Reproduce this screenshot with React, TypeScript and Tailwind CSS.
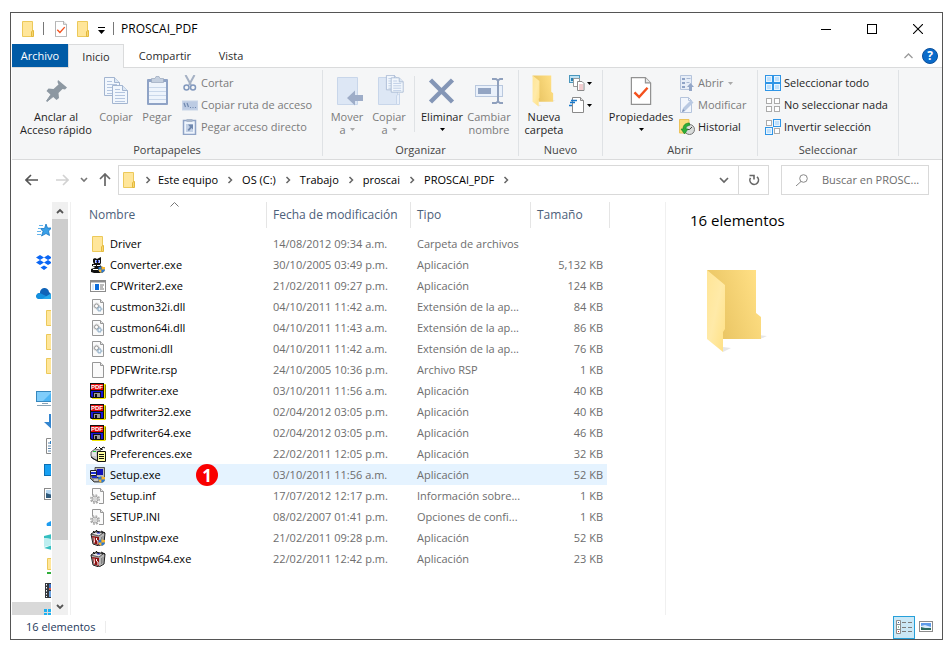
import type { ReactNode } from "react";

type IconProps = { className?: string };

/* ---------- shared icons ---------- */

const FolderIcon = ({ className = "" }: IconProps) => (
  <svg className={`w-4 h-4 shrink-0 ${className}`} viewBox="0 0 16 16">
    <path d="M2.500 .5h10v15h-10z" fill="#ffe69a" stroke="#ecc95a" />
    <path d="M11.500 15.500v-4.500l1-1.500h1v6z" fill="#f7d774" stroke="#e3b93c" />
  </svg>
);

const CheckDocIcon = ({ className = "w-4 h-4" }: IconProps) => (
  <svg className={className} viewBox="0 0 22 30" preserveAspectRatio="xMidYMid meet">
    <path d="M.7 .7h15l5.600 5.600v23h-20.600z" fill="#fff" stroke="#929292" strokeWidth="1.300" />
    <path d="M15.700 .7v5.600h5.600" fill="#e8e8e8" stroke="#929292" strokeWidth="1.200" />
    <path d="M4 16.500l5 5 9-10" fill="none" stroke="#f4511e" strokeWidth="2.600" />
  </svg>
);

const Caret = ({ className = "text-black" }: IconProps) => (
  <svg className={`w-[5px] h-[3px] ${className}`} viewBox="0 0 5 3">
    <path d="M0 0h5l-2.500 3z" fill="currentColor" />
  </svg>
);

const Chevron = ({ className = "" }: IconProps) => (
  <svg className={`w-2 h-2 ${className}`} viewBox="0 0 8 8" fill="none" stroke="currentColor" strokeWidth="1.500">
    <path d="M2.500 1l3 3-3 3" />
  </svg>
);

/* ---------- ribbon icons ---------- */

const PinIcon = () => (
  <svg className="w-8 h-8" viewBox="0 0 32 32">
    <path d="M18 5l9 7.500-2 2-2.500-.5-4 4 .5 5-2.500 2-10-9 2-2.500 5 .5 5-4.500-1-2.500z" fill="#8d98a2" />
    <path d="M12 18l2.500 2.500-7.500 6-.5-.5z" fill="#8d98a2" stroke="#8d98a2" />
  </svg>
);

const Sheet = ({ x, y }: { x: number; y: number }) => (
  <g transform={`translate(${x} ${y})`}>
    <path d="M.5 .5h10l5 5v13h-15z" fill="#f2f7fd" stroke="#a3b5d0" />
    <path d="M10.500 .5v5h5" fill="#dce7f4" stroke="#a3b5d0" />
    <path d="M3 4.500h5M3 7.500h10M3 10.500h10M3 13.500h10M3 16.500h10" stroke="#b4c5df" />
  </g>
);

const CopyIcon = () => (
  <svg className="w-8 h-8" viewBox="0 0 32 32">
    <Sheet x={4} y={2} />
    <Sheet x={12} y={10} />
  </svg>
);

const PasteIcon = () => (
  <svg className="w-8 h-8" viewBox="0 0 32 32">
    <rect x="6" y="4" width="21" height="26" rx="1" fill="#8fa3c6" />
    <rect x="8" y="7" width="17" height="21" fill="#eef4fc" />
    <path d="M8 12.500h17M8 16.500h17M8 20.500h17M8 24.500h17" stroke="#c9d7ea" />
    <path d="M10.500 3.500h3.500l1-2h3l1 2h3.500v4h-12z" fill="#c4cfdf" stroke="#9aa8bd" strokeWidth=".7" />
  </svg>
);

const ScissorsIcon = () => (
  <svg className="w-4 h-4" viewBox="0 0 16 16" fill="none">
    <path d="M3.500 0l5.500 10M12.500 0L7 10" stroke="#a5b1c4" strokeWidth="2" />
    <circle cx="4.500" cy="12.500" r="2.500" stroke="#8198bd" strokeWidth="1.500" />
    <circle cx="11" cy="12.500" r="2.500" stroke="#8198bd" strokeWidth="1.500" />
  </svg>
);

const PathIcon = () => (
  <svg className="w-4 h-4" viewBox="0 0 16 16">
    <rect x=".5" y="4" width="15" height="9" fill="#bccbe3" stroke="#c9d5e8" />
    <path d="M2 6l1.500 4M5 6l1.500 4" stroke="#6f87ae" strokeWidth="1.200" />
    <path d="M8 10.500h1M10.500 10.500h1M13 10.500h1" stroke="#6f87ae" />
  </svg>
);

const PasteLinkIcon = () => (
  <svg className="w-4 h-4" viewBox="0 0 16 16">
    <rect x="1.500" y="1.500" width="12" height="14" fill="#eef4fc" stroke="#8fa3c6" strokeWidth="1.500" />
    <rect x="4.500" y="0" width="6" height="3" fill="#a9b7cc" />
    <rect x="4" y="5" width="7" height="8" fill="#c3d1e6" />
    <path d="M6 5.500h5v5l-1.500-1.500-2.500 3-1.500-1 2.500-3z" fill="#6f87ae" />
  </svg>
);

const MoveToIcon = () => (
  <svg className="w-8 h-8" viewBox="0 0 32 32">
    <path d="M6.500 2.500h20v27h-20z" fill="#dde7f5" stroke="#c8d6ea" />
    <path d="M32 20v6h-8v4.500l-8-7.500 8-7.500v4.500z" fill="#9eadc8" />
  </svg>
);

const CopyToIcon = () => (
  <svg className="w-8 h-8" viewBox="0 0 32 32">
    <path d="M5.500 2.500h19v27h-19z" fill="#dde7f5" stroke="#c8d6ea" />
    <path d="M23.500 29.500v-9l3-2v11z" fill="#e9f0fa" stroke="#c8d6ea" />
    <g transform="translate(13 0) scale(.8)">
      <Sheet x={0} y={0} />
      <Sheet x={6} y={3} />
    </g>
  </svg>
);

const DeleteIcon = () => (
  <svg className="w-8 h-8" viewBox="0 0 32 32">
    <path d="M4.500 5l22 22M26.500 5l-22 22" stroke="#8496b6" strokeWidth="4.500" />
  </svg>
);

const RenameIcon = () => (
  <svg className="w-8 h-8" viewBox="0 0 32 32" fill="none">
    <rect x="2.500" y="10.500" width="27" height="11" fill="#eaf1fb" stroke="#b9c8de" />
    <rect x="5" y="13" width="13" height="6" fill="#93a5c3" />
    <path d="M19 4h4l2 1.500 2-1.500h3M25 4v24M19 28h4l2-1.500 2 1.500h3" stroke="#8fa0bd" strokeWidth="2" />
  </svg>
);

const OpenFolder = ({ className = "w-8 h-8" }: IconProps) => (
  <svg className={className} viewBox="0 0 62 84">
    <defs>
      <linearGradient id="back" x1="0" x2="1" y1=".7" y2=".3">
        <stop offset="0.200" stopColor="#ebc766" />
        <stop offset="1" stopColor="#ffdf84" />
      </linearGradient>
      <linearGradient id="flap" x1="0" x2="1" y1="0" y2="1">
        <stop offset="0" stopColor="#ffe596" />
        <stop offset=".5" stopColor="#ffeaa8" />
        <stop offset="1" stopColor="#ffe082" />
      </linearGradient>
    </defs>
    <path d="M53 66l8 1-7 3zM17 78l8 1-8 4z" fill="#e6e6e6" />
    <path d="M1 1h49v43l5 4v22H17z" fill="url(#back)" />
    <path d="M1 1l18 15v44l-2 3v20L1 70z" fill="url(#flap)" />
  </svg>
);

const NewItemIcon = () => (
  <svg className="w-4 h-4" viewBox="0 0 16 16">
    <rect x=".5" y=".5" width="10" height="7" fill="#bfe3f5" stroke="#4a97bd" />
    <rect x="2" y="3" width="3" height="3" fill="#267fb0" />
    <path d="M4.500 3.500h6v8h-6z" fill="#fff" stroke="#9a9a9a" />
    <path d="M8.500 6.500h4.500l2 2v7h-6.500z" fill="#fff" stroke="#8a8a8a" />
    <path d="M10 10h4M10 12h4M10 14h4" stroke="#e59aa0" />
  </svg>
);

const EasyAccessIcon = () => (
  <svg className="w-4 h-4" viewBox="0 0 16 16">
    <path d="M3.500 .5h8l3 3v12h-11z" fill="#fff" stroke="#8a8a8a" />
    <path d="M11.500 .5v3h3" fill="#ddd" stroke="#8a8a8a" />
    <path d="M2 3.500h6M1 5.500h5M0 8.500h3" stroke="#1979ca" strokeWidth="1.300" />
  </svg>
);

const OpenIcon = () => (
  <svg className="w-4 h-4" viewBox="0 0 16 16">
    <path d="M1.500 .5h11v14h-11z" fill="#e6edf7" stroke="#b5c4dc" />
    <path d="M3 3h3v2h-3zM3 7h3v2h-3zM3 11h3v2h-3z" fill="#8fa3c6" />
    <path d="M7.500 3.500h4M7.500 7.500h3" stroke="#a9b9d3" />
    <path d="M10 16v-4h-2l3.500-4 3.500 4h-2v4z" fill="#93a6c7" />
  </svg>
);

const EditIcon = () => (
  <svg className="w-4 h-4" viewBox="0 0 16 16">
    <path d="M1.500 .5h8l3 3v12h-11z" fill="#f2f6fc" stroke="#b5c4dc" />
    <path d="M9.500 .5v3h3" fill="none" stroke="#b5c4dc" />
    <path d="M3 15l1-4 8-8 2.500 2.500-8 8z" fill="#b9c9e2" />
    <path d="M3 15l1-3 2 2z" fill="#8095ba" />
  </svg>
);

const HistoryIcon = () => (
  <svg className="w-4 h-4" viewBox="0 0 16 16">
    <path d="M.5 .5h9.500v8h1.500v5.500h-11z" fill="#fbdc7b" stroke="#ecc35a" />
    <circle cx="10.500" cy="10.500" r="5" fill="#d9dcdb" stroke="#777" />
    <path d="M10.500 10.500l2.500-2.500M10.500 10.500h-2" stroke="#444" />
    <path d="M10.500 4c-4 0-6.500 2-6.500 6h-2l3.500 5 3.500-5h-2c0-2 1-3.500 3.500-3.500z" fill="#2fae3a" stroke="#158322" strokeWidth=".6" />
  </svg>
);

const Tile = ({ x, y, on }: { x: number; y: number; on: boolean }) => (
  <g>
    {on ? (
      <>
        <rect x={x + 0.5} y={y + 0.5} width="7" height="7" fill="#bfe0fb" stroke="#2f95e6" />
        <rect x={x + 1.5} y={y + 1.5} width="5" height="5" fill="none" stroke="#e8f5ff" />
      </>
    ) : (
      <rect x={x + 1.5} y={y + 1.5} width="5" height="5" fill="#fff" stroke="#ababab" />
    )}
  </g>
);

const TilesIcon = ({ on }: { on: boolean[] }) => (
  <svg className="w-4 h-4" viewBox="0 0 16 16">
    {on.map((v, i) => (
      <Tile key={i} x={(i % 2) * 8} y={i > 1 ? 8 : 0} on={v} />
    ))}
  </svg>
);

/* ---------- file icons ---------- */

const Shield = () => (
  <g>
    <path d="M11.500 9c-1.500 1-2 1-3 1v3c0 1.500 1.500 2.500 3 3z" fill="#2b78d4" />
    <path d="M11.500 9c1.500 1 2 1 3.500 1v3c0 1.500-2 2.500-3.500 3z" fill="#f7b731" />
    <path d="M8.500 12.500h3v3.500c-1.500-.5-3-1.500-3-3.500z" fill="#f7b731" />
    <path d="M11.500 12.500h3.500c0 2-2 3-3.500 3.500z" fill="#2b78d4" />
  </g>
);

const PageShape = () => (
  <g>
    <path d="M2.500 .5h8l3 3v12h-11z" fill="#fafafa" stroke="#979797" />
    <path d="M10.500 .5v3h3" fill="#e5e5e5" stroke="#979797" />
  </g>
);

const FileIcon = ({ kind }: { kind: string }) => {
  if (kind === "folder") return <FolderIcon />;
  return (
    <svg className="w-4 h-4 shrink-0" viewBox="0 0 16 16">
      {kind === "converter" && (
        <>
          <path d="M3 2l2-1 2 1 2-1 2-1v6l-1 2 2 2h2v4l-2 2h-8l-3-1v-3l3-1 1-1-3-1v-2h2l-1-2z" fill="#111" />
          <path d="M5 3h2v3h-2zM8 3h2v3h-2z" fill="#c9d4ff" />
          <path d="M3 8.500h3M7 8.500h3M3 12.500h5" stroke="#fff" />
          <path d="M6.500 3.500v2M8.500 3.500v2" stroke="#1733d6" />
          <Shield />
        </>
      )}
      {kind === "cpwriter" && (
        <>
          <rect x=".5" y="2.500" width="15" height="11" fill="#fff" stroke="#8c8c8c" />
          <path d="M0 3.500h16" stroke="#8c8c8c" strokeWidth="2" />
          <rect x="5" y="6" width="4" height="6" fill="#0b6cda" />
          <rect x="2" y="6" width="2" height="6" fill="#d7e9fb" />
          <path d="M10 7h4M10 9h3M10 11h4" stroke="#777" />
        </>
      )}
      {kind === "dll" && (
        <>
          <PageShape />
          <circle cx="6.500" cy="7" r="2" fill="#fff" stroke="#999" />
          <circle cx="6.500" cy="7" r="2.800" fill="none" stroke="#999" strokeWidth=".8" strokeDasharray="1 1" />
          <circle cx="9.500" cy="10" r="1.700" fill="#eef6fd" stroke="#88a8c2" />
          <circle cx="9.500" cy="10" r="2.500" fill="none" stroke="#88a8c2" strokeWidth=".8" strokeDasharray="1 1" />
        </>
      )}
      {kind === "page" && <PageShape />}
      {kind === "ini" && (
        <>
          <PageShape />
          <path d="M0 7h5v-1h4v10h-9z" fill="#fff" />
          <circle cx="5" cy="11" r="4.200" fill="none" stroke="#a5a5a5" strokeWidth="1.400" strokeDasharray="1.900 1.400" />
          <circle cx="5" cy="11" r="3" fill="#e2e2e2" stroke="#a5a5a5" />
          <circle cx="5" cy="11" r="1.200" fill="#fff" stroke="#a5a5a5" strokeWidth=".6" />
        </>
      )}
      {kind === "pdf" && (
        <>
          <path d="M2 1h14v14l-1 1h-13z" fill="#f2e600" />
          <path d="M15.500 2v13" stroke="#8a8400" />
          <path d="M0 0h14v15h-13l-1-1z" fill="#111" />
          <path d="M1 1h12v6h-12z" fill="#e30b0b" />
          <text x="7" y="6" textAnchor="middle" fill="#fff" className="font-['Liberation_Sans'] font-bold text-[6px]">
            PDF
          </text>
          <path d="M1 8h2v6h-1l-1-1zM11 8h2v6h-2zM3 8h8v1h-8z" fill="#1616d8" />
          <path d="M4 10h6v4h-6z" fill="#9a9a9a" />
          <path d="M5 11h2v3h-2z" fill="#111" />
        </>
      )}
      {kind === "prefs" && (
        <>
          <path d="M1 6l4-3 5 1v7l-3 3-4-1-2-3z" fill="#c9c9c9" stroke="#666" />
          <path d="M2 7h4M2 9h4" stroke="#fff" />
          <path d="M1 11l6 4M9 1l2 2 2-2 2 1M5 3l2-2M10 4l3-1" stroke="#111" fill="none" />
          <path d="M3 5h3v1h-3z" fill="#1fbf3a" />
          <path d="M7.500 5.500h8v10h-8z" fill="#ffffa0" stroke="#111" />
          <path d="M9 8.500h5M9 10.500h5M9 12.500h5" stroke="#111" />
        </>
      )}
      {kind === "setup" && (
        <>
          <path d="M5 .5h9.500v10h-9.500z" fill="#b8b8b8" stroke="#333" strokeWidth=".8" />
          <path d="M7 2h6v6h-6z" fill="#1010b8" />
          <path d="M.5 3.500h6v5h-6z" fill="#efefef" stroke="#222" />
          <path d="M0 9h6l2 2h4v4h-8l-4-4z" fill="#8a8a8a" stroke="#222" strokeWidth=".8" />
          <path d="M1 5h5v2h-5zM2 9h5v2h-5z" fill="#1c2ed0" />
          <path d="M4 13h4" stroke="#fff" />
          <Shield />
        </>
      )}
      {(kind === "uninst" || kind === "uninstShield") && (
        <>
          <path d="M1 4l5-3 9 2-1 10-5 3-6-2z" fill="#b5b5b5" stroke="#222" />
          <path d="M1 4l4-2 8 1-4 3z" fill="#e6e6e6" stroke="#222" strokeWidth=".7" />
          <path d="M3 1l2 2M6 0l3 3M11 1l4 2" stroke="#111" />
          <path d="M2 6l7 1v8l-5-1.500z" fill="#8f1111" />
          <path d="M4 7.500l.5 5M6.500 8v2l1.500 1v3" stroke="#fff" fill="none" />
          <path d="M7 3h3" stroke="#2430d8" />
          <path d="M11.500 7v6M13 6v6" stroke="#6d6d6d" strokeWidth=".7" />
          {kind === "uninstShield" && <Shield />}
        </>
      )}
    </svg>
  );
};

/* ---------- navigation pane icons ---------- */

const NavIcon = ({ kind }: { kind: string }) => (
  <svg className="w-4 h-4 shrink-0" viewBox="0 0 16 16">
    {kind === "star" && (
      <>
        <path d="M10 2l1.500 4h4l-3 3 1 4.500-3.500-2-4.500 2.500 1.500-4.500-2.500-3h4z" fill="#3aa0e8" stroke="#1877c4" strokeWidth=".8" />
        <path d="M3 3.500h4M2 6.500h3M1 9.500h4M1 12.500h4" stroke="#63b4ec" />
      </>
    )}
    {kind === "dropbox" && (
      <path
        d="M4 1l4 2.500-4 2.500-4-2.500zM12 1l4 2.500-4 2.500-4-2.500zM4 6l4 2.500-4 2.500-4-2.500zM12 6l4 2.500-4 2.500-4-2.500zM8 11.500l3.500 2-3.500 2.500-3.500-2.500z"
        fill="#0a66f5"
      />
    )}
    {kind === "onedrive" && (
      <>
        <path d="M4 7a4.500 4.500 0 0 1 9-1l3 3v4h-13a3 3 0 0 1 1-6z" fill="#0f63b8" />
        <path d="M0 11a3.500 3.500 0 0 1 5-3.500l11 5.500h-13a3 3 0 0 1-3-2z" fill="#1490df" />
        <path d="M6 13l8-5h2v5z" fill="#28a8ea" />
      </>
    )}
    {kind === "folder" && <path d="M2.500 .5h11v15h-11z" fill="#ffe69a" stroke="#ecc95a" />}
    {kind === "pc" && (
      <>
        <rect x=".5" y="1.500" width="17" height="10" fill="#4db5f5" stroke="#3787bd" />
        <path d="M1 2h15l-9 9h-6z" fill="#7fcdfb" />
        <path d="M6 13.500h6M1 15.500h15" stroke="#8aa3b5" />
      </>
    )}
    {kind === "down" && <path d="M5 0h5v8h5l-7.500 7-7.500-7h5z" fill="#3385cf" />}
    {kind === "doc" && (
      <>
        <path d="M2.500 .5h11v15h-11z" fill="#fff" stroke="#8a8a8a" />
        <path d="M4 5h5M4 8h5M4 10.500h5M4 13h5" stroke="#5c86ad" />
        <path d="M6 3h3v3h-3z" fill="#2b7cc0" />
      </>
    )}
    {kind === "desktop" && <rect x=".5" y="2.500" width="16" height="11" fill="#17a0f2" stroke="#0b6fb3" />}
    {kind === "pictures" && (
      <>
        <rect x=".5" y="2.500" width="16" height="11" fill="#fff" stroke="#8a8a8a" />
        <path d="M2 4h12v8h-12z" fill="#b7d8f2" />
        <path d="M2 7l3 1 4 1v3h-7z" fill="#2f5a7c" />
      </>
    )}
    {kind === "cloud" && <path d="M3 16a3 3 0 0 1 0-3l4-2h9v5z" fill="#1d9cf0" />}
    {kind === "cube" && (
      <>
        <path d="M0 2l8-2v5l-8-1zM0 14l8-3v5z" fill="#35bfc0" />
        <path d="M0 4l8 1v6l-8 2z" fill="#bdeef0" />
      </>
    )}
    {kind === "share" && (
      <>
        <path d="M3.500 .5h11v11h-11z" fill="#ffe69a" stroke="#ecc95a" />
        <path d="M3 15h8" stroke="#2fae3a" strokeWidth="2" />
      </>
    )}
    {kind === "film" && (
      <>
        <rect x="1" y="1" width="15" height="15" fill="#33373d" />
        <path d="M2.500 2v13" stroke="#fff" strokeDasharray="1.500 1.500" />
        <path d="M5 2h10v6h-10z" fill="#3f74c9" />
        <path d="M5 9h10v6h-10z" fill="#6aa1df" />
        <path d="M5 6h10v2h-10z" fill="#d8574a" />
      </>
    )}
    {kind === "windows" && (
      <path d="M0 7h3v3h-3zM4 7h3v3h-3zM0 11h3v3h-3zM4 11h3v3h-3z" fill="#1cb0f0" />
    )}
  </svg>
);

/* ---------- ribbon parts ---------- */

const Group = ({ label, className, children }: { label: string; className: string; children: ReactNode }) => (
  <section className={`flex flex-col shrink-0 h-[86px] mt-[2px] border-r border-[#dfe2e5] ${className}`}>
    <div className="flex items-start pt-[2px] h-[74px]">{children}</div>
    <h2 className="text-center leading-3 text-[#444]">{label}</h2>
  </section>
);

type BigProps = {
  icon: ReactNode;
  lines: string[];
  className: string;
  caret?: boolean;
  disabled?: boolean;
};

const BigButton = ({ icon, lines, className, caret, disabled }: BigProps) => (
  <button
    disabled={disabled}
    className={`flex flex-col items-center shrink-0 pt-[3px] whitespace-nowrap leading-[13px] ${
      disabled ? "text-[#7b7b7b]" : "text-[#1e1e1e]"
    } ${className}`}
  >
    {icon}
    <span className="pt-[3px]">{lines[0]}</span>
    <span className="flex items-center gap-1 min-h-[13px]">
      {lines[1]}
      {caret && <Caret className={disabled ? "text-[#a9a9a9]" : "text-black"} />}
    </span>
  </button>
);

type SmallProps = { icon: ReactNode; text: string; caret?: boolean; disabled?: boolean };

const SmallButton = ({ icon, text, caret, disabled }: SmallProps) => (
  <button
    disabled={disabled}
    className={`flex items-center gap-[3px] h-[22px] whitespace-nowrap ${
      disabled ? "text-[#7b7b7b]" : "text-[#1e1e1e]"
    }`}
  >
    {icon}
    {text}
    {caret && <Caret className="ml-[2px] text-[#a9a9a9]" />}
  </button>
);

/* ---------- data ---------- */

const files = [
  { name: "Driver", kind: "folder", date: "14/08/2012 09:34 a.m.", type: "Carpeta de archivos", size: "" },
  { name: "Converter.exe", kind: "converter", date: "30/10/2005 03:49 p.m.", type: "Aplicación", size: "5,132 KB" },
  { name: "CPWriter2.exe", kind: "cpwriter", date: "21/02/2011 09:27 p.m.", type: "Aplicación", size: "124 KB" },
  { name: "custmon32i.dll", kind: "dll", date: "04/10/2011 11:42 a.m.", type: "Extensión de la ap...", size: "84 KB" },
  { name: "custmon64i.dll", kind: "dll", date: "04/10/2011 11:43 a.m.", type: "Extensión de la ap...", size: "86 KB" },
  { name: "custmoni.dll", kind: "dll", date: "04/10/2011 11:42 a.m.", type: "Extensión de la ap...", size: "76 KB" },
  { name: "PDFWrite.rsp", kind: "page", date: "24/10/2005 10:36 p.m.", type: "Archivo RSP", size: "1 KB" },
  { name: "pdfwriter.exe", kind: "pdf", date: "03/10/2011 11:56 a.m.", type: "Aplicación", size: "40 KB" },
  { name: "pdfwriter32.exe", kind: "pdf", date: "02/04/2012 03:05 p.m.", type: "Aplicación", size: "40 KB" },
  { name: "pdfwriter64.exe", kind: "pdf", date: "02/04/2012 03:05 p.m.", type: "Aplicación", size: "46 KB" },
  { name: "Preferences.exe", kind: "prefs", date: "22/02/2011 12:05 p.m.", type: "Aplicación", size: "32 KB" },
  { name: "Setup.exe", kind: "setup", date: "03/10/2011 11:56 a.m.", type: "Aplicación", size: "52 KB", step: 1 },
  { name: "Setup.inf", kind: "ini", date: "17/07/2012 12:17 p.m.", type: "Información sobre...", size: "1 KB" },
  { name: "SETUP.INI", kind: "ini", date: "08/02/2007 01:41 p.m.", type: "Opciones de confi...", size: "1 KB" },
  { name: "unInstpw.exe", kind: "uninstShield", date: "21/02/2011 09:28 p.m.", type: "Aplicación", size: "52 KB" },
  { name: "unInstpw64.exe", kind: "uninst", date: "22/02/2011 12:42 p.m.", type: "Aplicación", size: "23 KB" },
];

const navItems = [
  { kind: "star", style: "mt-4 pl-6" },
  { kind: "dropbox", style: "mt-2 pl-6" },
  { kind: "onedrive", style: "mt-2 pl-6" },
  { kind: "folder", style: "pl-8" },
  { kind: "folder", style: "pl-8" },
  { kind: "folder", style: "pl-8" },
  { kind: "pc", style: "mt-2 pl-6" },
  { kind: "down", style: "pl-8" },
  { kind: "doc", style: "pl-8" },
  { kind: "desktop", style: "pl-8" },
  { kind: "pictures", style: "pl-8" },
  { kind: "cloud", style: "pl-8" },
  { kind: "cube", style: "pl-8" },
  { kind: "share", style: "pl-8" },
  { kind: "film", style: "pl-8" },
];

const crumbs = ["Este equipo", "OS (C:)", "Trabajo", "proscai", "PROSCAI_PDF"];

const columns = [
  { label: "Nombre", pad: "pl-[3px]", sorted: true },
  { label: "Fecha de modificación", pad: "pl-[6px]" },
  { label: "Tipo", pad: "pl-[6px]" },
  { label: "Tamaño", pad: "pl-[6px]" },
];

/* ---------- sections ---------- */

const TitleBar = () => (
  <header className="flex items-center h-[31px] pl-2 pr-px">
    <FolderIcon />
    <span className="w-px h-[13px] bg-[#777] ml-[7px] mr-[9px]" />
    <button aria-label="Propiedades">
      <CheckDocIcon className="w-4 h-4" />
    </button>
    <button aria-label="Nueva carpeta" className="ml-[6px]">
      <FolderIcon />
    </button>
    <button aria-label="Personalizar barra" className="ml-[7px] mt-1">
      <svg className="w-[7px] h-[7px]" viewBox="0 0 7 7">
        <path d="M0 .5h7" stroke="#000" />
        <path d="M0 3h7l-3.500 4z" fill="#000" />
      </svg>
    </button>
    <span className="w-px h-[13px] bg-[#777] ml-[8px] mr-[7px]" />
    <h1 className="text-[12px] text-black">PROSCAI_PDF</h1>
    <div className="flex ml-auto">
      <button aria-label="Minimizar" className="flex items-center justify-center w-[46px] h-[30px]">
        <svg className="w-[10px] h-[10px]" viewBox="0 0 10 10">
          <path d="M0 5.500h10" stroke="#000" />
        </svg>
      </button>
      <button aria-label="Maximizar" className="flex items-center justify-center w-[46px] h-[30px]">
        <svg className="w-[10px] h-[10px]" viewBox="0 0 10 10">
          <rect x=".5" y=".5" width="9" height="9" fill="none" stroke="#000" />
        </svg>
      </button>
      <button aria-label="Cerrar" className="flex items-center justify-center w-[46px] h-[30px]">
        <svg className="w-[10px] h-[10px]" viewBox="0 0 10 10">
          <path d="M0 0l10 10M10 0l-10 10" stroke="#000" strokeWidth="1.100" />
        </svg>
      </button>
    </div>
  </header>
);

const Tabs = () => (
  <nav className="flex h-6 border-b border-[#dadbdc] text-[#2b2b2b]">
    <button className="w-14 bg-[#005ba6] text-white">Archivo</button>
    <button className="w-14 -mb-px bg-[#f5f6f7] border-x border-t border-[#dadbdc]">Inicio</button>
    <button className="w-[82px]">Compartir</button>
    <button className="w-[50px]">Vista</button>
    <div className="flex items-center gap-[9px] ml-auto pr-[4px]">
      <button aria-label="Minimizar la cinta">
        <svg className="w-[9px] h-[6px]" viewBox="0 0 9 6" fill="none" stroke="#9a9a9a" strokeWidth="1.300">
          <path d="M.5 5l4-4 4 4" />
        </svg>
      </button>
      <button
        aria-label="Ayuda"
        className="flex items-center justify-center w-4 h-4 rounded-full bg-[#0a6bca] border border-[#0a4f9b] text-white text-[12px] font-bold leading-none"
      >
        ?
      </button>
    </div>
  </nav>
);

const Ribbon = () => (
  <div className="flex h-[92px] overflow-hidden bg-[#f5f6f7] border-b border-[#dadbdc]">
    <Group label="Portapapeles" className="w-[311px]">
      <BigButton icon={<PinIcon />} lines={["Anclar al", "Acceso rápido"]} className="w-[80px] ml-1" />
      <BigButton icon={<CopyIcon />} lines={["Copiar"]} className="w-10" disabled />
      <BigButton icon={<PasteIcon />} lines={["Pegar"]} className="w-[42px]" disabled />
      <div className="flex flex-col ml-1">
        <SmallButton icon={<ScissorsIcon />} text="Cortar" disabled />
        <SmallButton icon={<PathIcon />} text="Copiar ruta de acceso" disabled />
        <SmallButton icon={<PasteLinkIcon />} text="Pegar acceso directo" disabled />
      </div>
    </Group>
    <Group label="Organizar" className="w-[196px]">
      <BigButton icon={<MoveToIcon />} lines={["Mover", "a"]} className="w-[42px] ml-[3px]" caret disabled />
      <BigButton icon={<CopyToIcon />} lines={["Copiar", "a"]} className="w-[42px]" caret disabled />
      <span className="w-px h-14 mt-1 ml-1 mr-1 bg-[#dfe2e5]" />
      <BigButton icon={<DeleteIcon />} lines={["Eliminar"]} className="w-[46px]" caret />
      <BigButton icon={<RenameIcon />} lines={["Cambiar", "nombre"]} className="w-12" disabled />
    </Group>
    <Group label="Nuevo" className="w-[84px]">
      <BigButton icon={<OpenFolder />} lines={["Nueva", "carpeta"]} className="w-[42px] ml-1" />
      <div className="flex flex-col ml-1">
        <button aria-label="Nuevo elemento" className="flex items-center gap-[2px] h-[22px]">
          <NewItemIcon />
          <Caret />
        </button>
        <button aria-label="Fácil acceso" className="flex items-center gap-[2px] h-[22px]">
          <EasyAccessIcon />
          <Caret />
        </button>
      </div>
    </Group>
    <Group label="Abrir" className="w-[155px]">
      <BigButton icon={<CheckDocIcon className="w-8 h-7 my-[2px]" />} lines={["Propiedades"]} className="w-[68px] ml-1" caret />
      <div className="flex flex-col ml-1">
        <SmallButton icon={<OpenIcon />} text="Abrir" caret disabled />
        <SmallButton icon={<EditIcon />} text="Modificar" disabled />
        <SmallButton icon={<HistoryIcon />} text="Historial" />
      </div>
    </Group>
    <Group label="Seleccionar" className="w-[141px]">
      <div className="flex flex-col ml-[7px]">
        <SmallButton icon={<TilesIcon on={[true, true, true, true]} />} text="Seleccionar todo" />
        <SmallButton icon={<TilesIcon on={[false, false, false, false]} />} text="No seleccionar nada" />
        <SmallButton icon={<TilesIcon on={[false, true, true, false]} />} text="Invertir selección" />
      </div>
    </Group>
  </div>
);

const AddressRow = () => (
  <div className="flex items-center h-[42px] pl-[13px] pr-[13px] pb-[2px]">
    <button aria-label="Atrás" className="text-[#555]">
      <svg className="w-[14px] h-3" viewBox="0 0 14 12" fill="none" stroke="currentColor" strokeWidth="1.600">
        <path d="M6 1l-5 5 5 5M1 6h12" />
      </svg>
    </button>
    <button aria-label="Adelante" className="ml-4 text-[#d2d2d2]">
      <svg className="w-[14px] h-3" viewBox="0 0 14 12" fill="none" stroke="currentColor" strokeWidth="1.600">
        <path d="M8 1l5 5-5 5M13 6h-12" />
      </svg>
    </button>
    <button aria-label="Recientes" className="ml-[11px] text-[#777]">
      <svg className="w-2 h-[6px]" viewBox="0 0 8 6" fill="none" stroke="currentColor" strokeWidth="1.600">
        <path d="M1 1l3 3 3-3" />
      </svg>
    </button>
    <button aria-label="Subir" className="ml-[11px] text-[#666]">
      <svg className="w-3 h-[14px]" viewBox="0 0 12 14" fill="none" stroke="currentColor" strokeWidth="1.700">
        <path d="M1 6l5-5 5 5M6 1v12" />
      </svg>
    </button>
    <div className="flex flex-1 items-center h-[30px] ml-[7px] border border-[#d9d9d9]">
      <FolderIcon className="ml-[2px]" />
      <ol className="flex items-center flex-1 ml-px text-black">
        <li className="flex items-center justify-center w-5">
          <Chevron className="text-[#666]" />
        </li>
        {crumbs.map((c) => (
          <li key={c} className="flex items-center">
            <button className="whitespace-nowrap">{c}</button>
            <span className="flex justify-center w-6">
              <Chevron className="text-[#666]" />
            </span>
          </li>
        ))}
      </ol>
      <button aria-label="Ubicaciones anteriores" className="flex justify-center w-[29px] text-[#666]">
        <svg className="w-[10px] h-[7px]" viewBox="0 0 10 7" fill="none" stroke="currentColor" strokeWidth="1.700">
          <path d="M1 1l4 4 4-4" />
        </svg>
      </button>
      <button
        aria-label="Actualizar"
        className="flex items-center justify-center w-[30px] h-full border-l border-[#d9d9d9] text-[#666]"
      >
        <svg className="w-3 h-3" viewBox="0 0 12 12" fill="none" stroke="currentColor" strokeWidth="1.600">
          <path d="M9 2.800a4.300 4.300 0 1 1-6.500 1" />
          <path d="M1.500 1.500h4.500v4" />
        </svg>
      </button>
    </div>
    <label className="flex items-center w-[148px] h-[30px] ml-3 pl-[14px] border border-[#d9d9d9]">
      <svg className="w-3 h-3 shrink-0" viewBox="0 0 12 12" fill="none" stroke="#888">
        <circle cx="7.500" cy="4.500" r="3.800" />
        <path d="M5 7.500l-5 4.500" />
      </svg>
      <input
        type="text"
        aria-label="Buscar en PROSCAI_PDF"
        placeholder="Buscar en PROSC..."
        className="flex-1 min-w-0 ml-[14px] outline-none placeholder:text-[#6d6d6d]"
      />
    </label>
  </div>
);

const NavPane = () => (
  <aside className="flex shrink-0 w-[59px] border-r border-[#f0f0f0]">
    <div className="flex flex-col w-10 overflow-hidden pr-px">
      {navItems.map((item, i) => (
        <div key={i} className={`flex items-center h-6 shrink-0 overflow-hidden ${item.style}`}>
          <NavIcon kind={item.kind} />
        </div>
      ))}
      <div className="flex items-start shrink-0 overflow-hidden h-[13px] pl-8 bg-[#d9d9d9]">
        <NavIcon kind="windows" />
      </div>
    </div>
    <div className="flex flex-col w-4 bg-[#f0f0f0] text-[#555]">
      <button aria-label="Subir lista" className="flex items-center justify-center h-[17px]">
        <svg className="w-2 h-[6px]" viewBox="0 0 8 6" fill="none" stroke="currentColor" strokeWidth="1.800">
          <path d="M1 5l3-3 3 3" />
        </svg>
      </button>
      <div className="grow-[11] bg-[#cdcdcd]" />
      <div className="grow-[2]" />
      <button aria-label="Bajar lista" className="flex items-center justify-center h-[17px]">
        <svg className="w-2 h-[6px]" viewBox="0 0 8 6" fill="none" stroke="currentColor" strokeWidth="1.800">
          <path d="M1 1l3 3 3-3" />
        </svg>
      </button>
    </div>
  </aside>
);

const FileTable = () => (
  <table className="self-start table-fixed w-[524px] ml-[15px] border-collapse text-[#6d6d6d]">
    <colgroup>
      <col className="w-[181px]" />
      <col className="w-[144px]" />
      <col className="w-[120px]" />
      <col className="w-[76px]" />
      <col className="w-[3px]" />
    </colgroup>
    <thead>
      <tr>
        {columns.map((c, i) => (
          <th key={c.label} colSpan={i === 3 ? 2 : 1} className="h-[31px] p-0 align-top font-normal">
            <button
              className={`relative flex items-center w-full h-[26px] border-r border-[#e5e5e5] text-[12px] text-[#4c607a] whitespace-nowrap ${c.pad}`}
            >
              {c.label}
              {c.sorted && (
                <svg
                  className="absolute top-0 left-[84px] w-[9px] h-[5px]"
                  viewBox="0 0 9 5"
                  fill="none"
                  stroke="#777"
                >
                  <path d="M.5 4.500l4-4 4 4" />
                </svg>
              )}
            </button>
          </th>
        ))}
      </tr>
    </thead>
    <tbody>
      {files.map((f) => {
        const bg = f.step ? "bg-[#e5f3ff]" : "";
        return (
          <tr key={f.name} className="h-[21px] whitespace-nowrap">
            <td className={`relative p-0 text-black ${bg}`}>
              <div className="flex items-center gap-1 pl-1">
                <FileIcon kind={f.kind} />
                {f.name}
              </div>
              {f.step && (
                <span className="absolute top-0 left-[110px] flex items-center justify-center w-[22px] h-[22px] rounded-full bg-[#f90000] text-white font-bold text-[17px] leading-none">
                  {f.step}
                </span>
              )}
            </td>
            <td className={`p-0 pl-[6px] ${bg}`}>{f.date}</td>
            <td className={`p-0 pl-[6px] ${bg}`}>{f.type}</td>
            <td className={`p-0 pr-1 text-right ${bg}`}>{f.size}</td>
            <td className="p-0" />
          </tr>
        );
      })}
    </tbody>
  </table>
);

const StatusBar = () => (
  <footer className="flex items-center h-6 pl-[14px] pr-2 text-[#1e395b]">
    <span>16 elementos</span>
    <span className="w-px h-3 ml-[10px] bg-[#ececec]" />
    <div className="flex items-center gap-[3px] ml-auto">
      <button
        aria-label="Detalles"
        className="flex items-center justify-center w-[22px] h-[23px] border border-[#26a0da] bg-[#cbe8f6]"
      >
        <svg className="w-4 h-[14px]" viewBox="0 0 16 14">
          <path d="M.5 .5h4v13h-4zM.5 4.500h4M.5 9.500h4" fill="#fff" stroke="#8c8c8c" />
          <path d="M2 2.500h1" stroke="#2b6cb0" />
          <path d="M2 7h1" stroke="#2b8c4a" />
          <path d="M2 11.500h1" stroke="#c0392b" />
          <path d="M6 2.500h4M12 2.500h4M6 7.500h4M12 7.500h4M6 11.500h4M12 11.500h4" stroke="#7d7d7d" />
        </svg>
      </button>
      <button aria-label="Iconos grandes" className="flex items-center">
        <svg className="w-4 h-3" viewBox="0 0 16 12">
          <rect x="1.500" y=".5" width="13" height="10" fill="#fff" stroke="#8c8c8c" />
          <rect x="3" y="2" width="10" height="7" fill="#5e9bea" />
          <path d="M3 5l4-1 6 2v1h-10z" fill="#d9ebfb" />
          <path d="M3 6l4 1 6 0v2h-10z" fill="#2e6d62" />
        </svg>
      </button>
    </div>
  </footer>
);

const App = () => {
  return (
    <div className="flex flex-col min-h-screen bg-white pt-3 pl-[10px] pr-[7px] pb-[7px] font-['Open_Sans','Noto_Sans',sans-serif] text-[11px] leading-4">
      <div className="flex flex-col flex-1 border border-[#555] pl-px">
        <TitleBar />
        <Tabs />
        <Ribbon />
        <AddressRow />
        <main className="flex flex-1">
          <NavPane />
          <FileTable />
          <section className="flex-1 ml-[55px] pl-6 border-l border-[#f0f0f0] text-black">
            <h2 className="pt-2 text-[15px] leading-5">16 elementos</h2>
            <OpenFolder className="w-[62px] h-[84px] ml-4 mt-[39px]" />
          </section>
        </main>
        <StatusBar />
      </div>
    </div>
  );
};

export default App;
